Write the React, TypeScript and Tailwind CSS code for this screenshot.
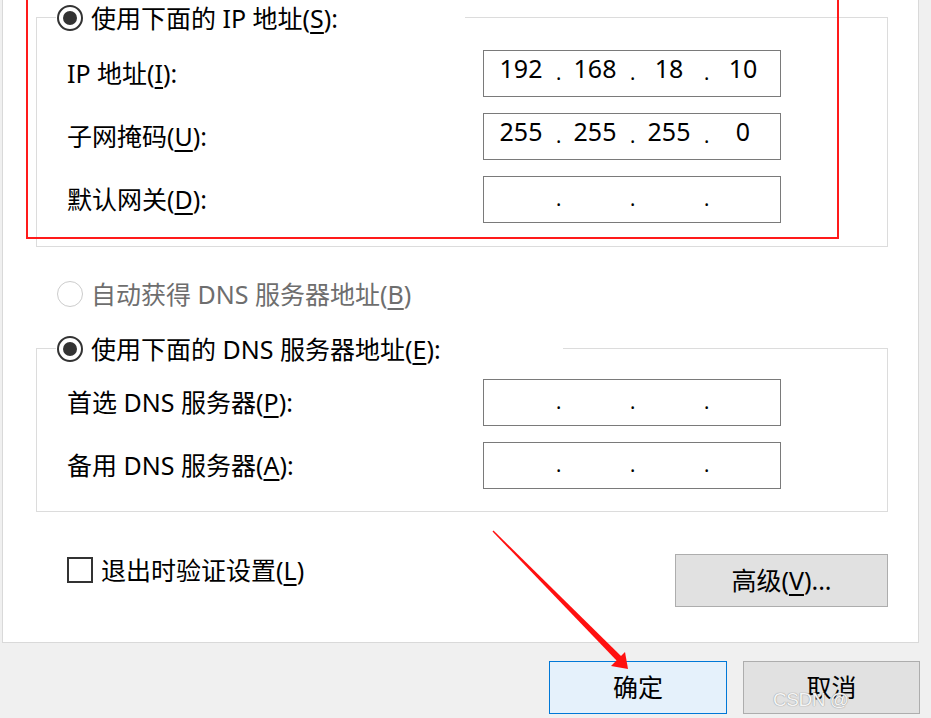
import React from 'react';

const font = { fontFamily: '"Noto Sans", "Noto Sans CJK SC", sans-serif' };

function Radio({ checked, disabled }: { checked?: boolean; disabled?: boolean }) {
  return (
    <span
      className={
        'flex items-center justify-center w-[26px] h-[26px] rounded-full shrink-0 ' +
        (disabled ? 'border-[1.5px] border-[#cccccc]' : 'border-2 border-[#333333]')
      }
    >
      {checked && <span className="w-[14px] h-[14px] rounded-full bg-[#333333]" />}
    </span>
  );
}

function IpBox({ parts }: { parts?: string[] }) {
  const p = parts ?? ['', '', '', ''];
  return (
    <div className="flex items-center w-[298px] h-[47px] border border-[#7a7a7a] bg-white pl-[2px] pb-[11px] text-[25px] leading-none text-black">
      <span className="w-[70px] text-center">{p[0]}</span>
      <span className="w-[4px] text-center text-[20px] pt-[10px]">.</span>
      <span className="w-[70px] text-center">{p[1]}</span>
      <span className="w-[4px] text-center text-[20px] pt-[10px]">.</span>
      <span className="w-[70px] text-center">{p[2]}</span>
      <span className="w-[4px] text-center text-[20px] pt-[10px]">.</span>
      <span className="w-[70px] text-center">{p[3]}</span>
    </div>
  );
}

function Row({ label, parts }: { label: React.ReactNode; parts?: string[] }) {
  return (
    <div className="flex items-center h-[47px] pl-[30px]">
      <span className="w-[416px] text-[25px] leading-none text-black">{label}</span>
      <IpBox parts={parts} />
    </div>
  );
}

function Group({
  legend,
  legendWidth,
  children,
  pt,
  pb,
}: {
  legend: React.ReactNode;
  legendWidth: string;
  children: React.ReactNode;
  pt: string;
  pb: string;
}) {
  return (
    <div className={'ml-[33px] w-[852px] border border-[#dcdcdc] ' + pb}>
      <div className={'-mt-[13px] ml-[19px] pl-[1px] h-[26px] bg-white flex items-center gap-[8px] ' + legendWidth}>
        <Radio checked />
        <span className="text-[25px] leading-none text-black whitespace-nowrap">{legend}</span>
      </div>
      <div className={'flex flex-col gap-[16px] ' + pt}>{children}</div>
    </div>
  );
}

export default function App() {
  return (
    <div className="relative w-[931px] h-[718px] overflow-hidden bg-[#f0f0f0]" style={font}>
      <div className="ml-[2px] w-[917px] h-[643px] bg-white border-l border-r border-b border-[#d9d9d9] flex flex-col pt-[17px]">
        <Group
          legend={<>使用下面的 IP 地址(<u className="underline-offset-4">S</u>):</>}
          legendWidth="w-[409px]"
          pt="mt-[19px]"
          pb="pb-[23px]"
        >
          <Row label={<>IP 地址(<u className="underline-offset-4">I</u>):</>} parts={['192', '168', '18', '10']} />
          <Row label={<>子网掩码(<u className="underline-offset-4">U</u>):</>} parts={['255', '255', '255', '0']} />
          <Row label={<>默认网关(<u className="underline-offset-4">D</u>):</>} />
        </Group>

        <div className="mt-[34px] ml-[54px] h-[26px] flex items-center gap-[8px]">
          <Radio disabled />
          <span className="text-[25px] leading-none text-[#6e6e6e] whitespace-nowrap">
            自动获得 DNS 服务器地址(<u className="underline-offset-4">B</u>)
          </span>
        </div>

        <div className="mt-[41px]">
          <Group
            legend={<>使用下面的 DNS 服务器地址(<u className="underline-offset-4">E</u>):</>}
            legendWidth="w-[507px]"
            pt="mt-[17px]"
            pb="pb-[22px]"
          >
            <Row label={<>首选 DNS 服务器(<u className="underline-offset-4">P</u>):</>} />
            <Row label={<>备用 DNS 服务器(<u className="underline-offset-4">A</u>):</>} />
          </Group>
        </div>

        <div className="mt-[42px] flex items-start justify-between pl-[64px] pr-[30px]">
          <div className="mt-[3px] flex items-center gap-[8px]">
            <span className="w-[26px] h-[26px] border-2 border-[#333333] bg-white" />
            <span className="text-[25px] leading-none text-black whitespace-nowrap">
              退出时验证设置(<u className="underline-offset-4">L</u>)
            </span>
          </div>
          <button className="w-[213px] h-[53px] bg-[#e1e1e1] border border-[#adadad] text-[25px] leading-none text-black">
            高级(<u className="underline-offset-4">V</u>)...
          </button>
        </div>
      </div>

      <div className="mt-[18px] flex justify-end gap-[16px] pr-[11px]">
        <button className="w-[178px] h-[53px] bg-[#e5f1fb] border border-[#0078d7] text-[25px] leading-none text-black">
          确定
        </button>
        <button className="w-[177px] h-[53px] bg-[#e1e1e1] border border-[#adadad] text-[25px] leading-none text-black">
          取消
        </button>
      </div>

      {/* red annotation box */}
      <div className="absolute left-[26px] -top-[12px] w-[813px] h-[251px] border-2 border-[#ff1a1a] pointer-events-none" />

      {/* red arrow */}
      <svg className="absolute left-0 top-0 pointer-events-none" width="931" height="718">
        <polygon points="492.5,531.5 493.5,530.5 622,657 617.5,661.5" fill="#ff1010" />
        <polygon points="628,669 611,666 625,652" fill="#ff1010" />
      </svg>

      {/* watermark */}
      <span
        className="absolute left-[773px] top-[690px] text-[19px] leading-none text-[#f4f4f4] tracking-tight"
        style={{ fontFamily: '"Liberation Sans", sans-serif', textShadow: '0 0 1px #9a9a9a, 0 0 1px #9a9a9a' }}
      >
        CSDN @
      </span>
    </div>
  );
}
